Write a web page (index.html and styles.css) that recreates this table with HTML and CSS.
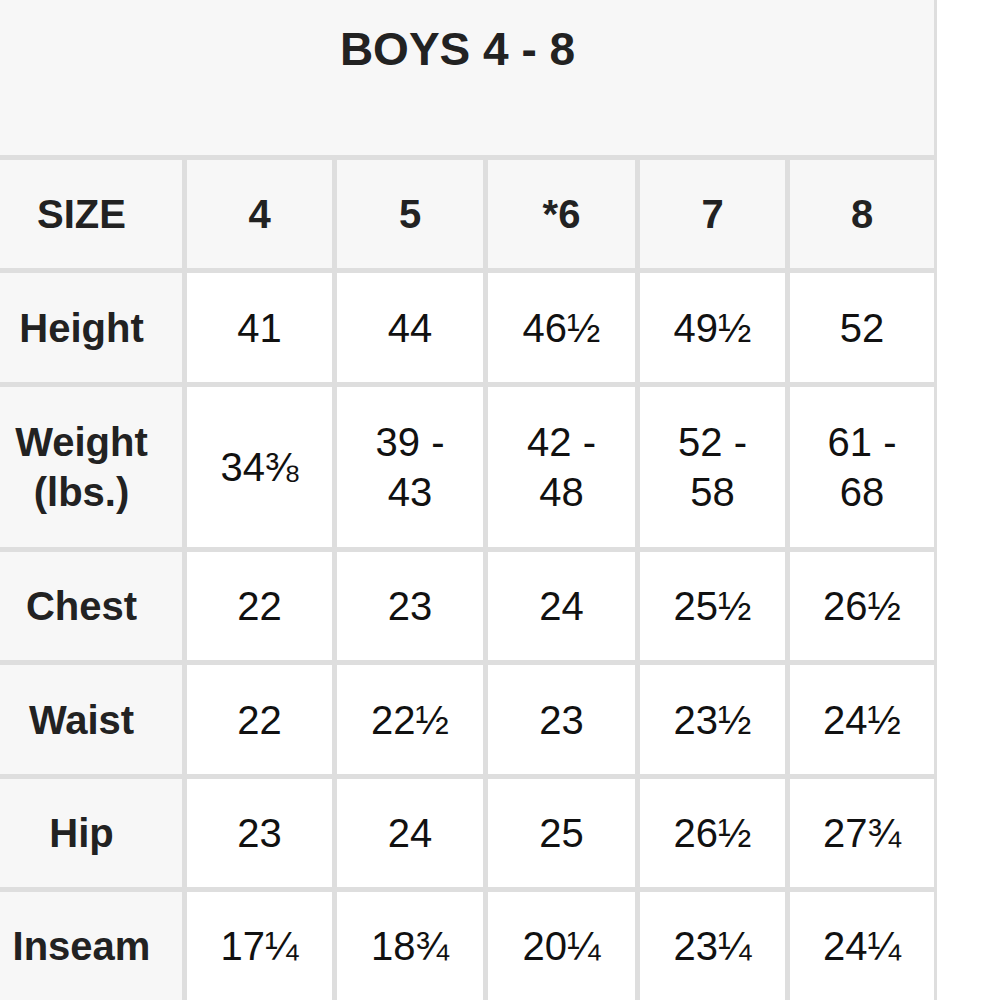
FILE: index.html
```html
<!DOCTYPE html>
<html lang="en">
<head>
<meta charset="utf-8">
<title>Boys 4 - 8 Size Chart</title>
<link rel="stylesheet" href="styles.css">
</head>
<body>
<div class="chart" role="table" aria-label="BOYS 4 - 8">
  <div class="title" role="caption">BOYS 4 - 8</div>

  <div class="cell head label">SIZE</div>
  <div class="cell head">4</div>
  <div class="cell head">5</div>
  <div class="cell head">*6</div>
  <div class="cell head">7</div>
  <div class="cell head">8</div>

  <div class="cell label">Height</div>
  <div class="cell">41</div>
  <div class="cell">44</div>
  <div class="cell">46½</div>
  <div class="cell">49½</div>
  <div class="cell">52</div>

  <div class="cell label">Weight (lbs.)</div>
  <div class="cell">34⅜</div>
  <div class="cell">39 - 43</div>
  <div class="cell">42 - 48</div>
  <div class="cell">52 - 58</div>
  <div class="cell">61 - 68</div>

  <div class="cell label">Chest</div>
  <div class="cell">22</div>
  <div class="cell">23</div>
  <div class="cell">24</div>
  <div class="cell">25½</div>
  <div class="cell">26½</div>

  <div class="cell label">Waist</div>
  <div class="cell">22</div>
  <div class="cell">22½</div>
  <div class="cell">23</div>
  <div class="cell">23½</div>
  <div class="cell">24½</div>

  <div class="cell label">Hip</div>
  <div class="cell">23</div>
  <div class="cell">24</div>
  <div class="cell">25</div>
  <div class="cell">26½</div>
  <div class="cell">27¾</div>

  <div class="cell label">Inseam</div>
  <div class="cell">17¼</div>
  <div class="cell">18¾</div>
  <div class="cell">20¼</div>
  <div class="cell">23¼</div>
  <div class="cell">24¼</div>
</div>
</body>
</html>
```

FILE: styles.css
```css
html, body {
  margin: 0;
  padding: 0;
  background: #ffffff;
  overflow: hidden;
}

body {
  font-family: "Liberation Sans", Arial, sans-serif;
  color: #111111;
}

.chart {
  display: grid;
  grid-template-columns: 201px 145px 146px 147px 145px 144px;
  grid-template-rows: 155px 108px 109px 160px 108px 109px 108px 108px;
  gap: 5px;
  width: max-content;
  margin-left: -19px;
  padding-right: 3px;
  background: #dedede;
}

.title {
  grid-column: 1 / -1;
  background: #f7f7f7;
  box-sizing: border-box;
  padding-top: 26px;
  text-align: center;
  font-size: 46px;
  line-height: 46px;
  font-weight: bold;
  color: #222222;
}

.cell {
  display: flex;
  align-items: center;
  justify-content: center;
  box-sizing: border-box;
  padding: 0 16px;
  background: #ffffff;
  text-align: center;
  font-size: 40px;
  line-height: 50px;
}

.head,
.label {
  background: #f7f7f7;
  font-weight: bold;
  color: #222222;
}
```
